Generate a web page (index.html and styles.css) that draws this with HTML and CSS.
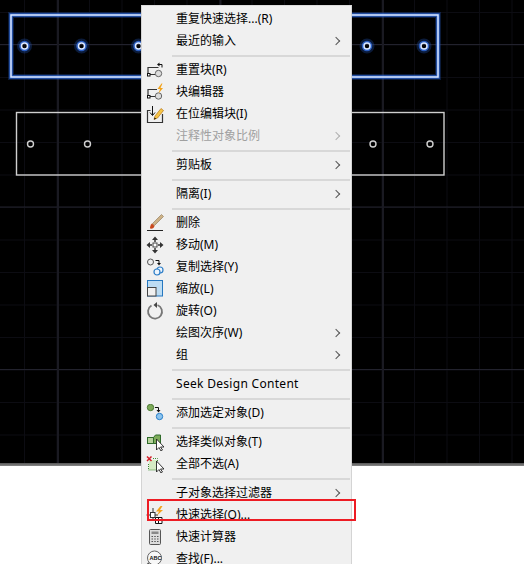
FILE: index.html
```html
<!DOCTYPE html>
<html lang="zh-CN">
<head>
    <meta charset="UTF-8">
    <meta name="viewport" content="width=device-width, initial-scale=1.0">
    <title>快速选择</title>
    <link rel="stylesheet" href="styles.css">
</head>
<body>
    <div class="stage">
        <div class="canvas">
            <svg class="drawing" width="524" height="463" viewBox="0 0 524 463">
                <!-- 选中的块 -->
                <g fill="none" stroke="#2458c0" stroke-opacity="0.3">
                    <rect x="11" y="15" width="427" height="62" stroke-width="6"/>
                    <circle cx="24.5" cy="46" r="5.5" stroke-width="4"/>
                    <circle cx="81.5" cy="46" r="5.5" stroke-width="4"/>
                    <circle cx="138.500" cy="46" r="5.5" stroke-width="4"/>
                    <circle cx="367" cy="46" r="5.5" stroke-width="4"/>
                    <circle cx="424" cy="46" r="5.5" stroke-width="4"/>
                </g>
                <g fill="none" stroke="#2f66d0" stroke-opacity="0.9">
                    <rect x="11" y="15" width="427" height="62" stroke-width="3.500"/>
                    <circle cx="24.5" cy="46" r="4" stroke-width="2.500"/>
                    <circle cx="81.5" cy="46" r="4" stroke-width="2.500"/>
                    <circle cx="138.500" cy="46" r="4" stroke-width="2.500"/>
                    <circle cx="367" cy="46" r="4" stroke-width="2.500"/>
                    <circle cx="424" cy="46" r="4" stroke-width="2.500"/>
                </g>
                <g fill="none" stroke="#dce8ff">
                    <rect x="11" y="15" width="427" height="62" stroke-width="1.500"/>
                    <circle cx="24.5" cy="46" r="3" stroke-width="1.500"/>
                    <circle cx="81.5" cy="46" r="3" stroke-width="1.500"/>
                    <circle cx="138.500" cy="46" r="3" stroke-width="1.500"/>
                    <circle cx="367" cy="46" r="3" stroke-width="1.500"/>
                    <circle cx="424" cy="46" r="3" stroke-width="1.500"/>
                </g>
                <!-- 未选中的块 -->
                <g fill="none" stroke="#cfcfcf" stroke-width="1.400">
                    <rect x="16.500" y="112.500" width="427.500" height="62.500"/>
                    <circle cx="30.500" cy="144" r="3"/>
                    <circle cx="87.500" cy="144" r="3"/>
                    <circle cx="373" cy="144" r="3"/>
                    <circle cx="430" cy="144" r="3"/>
                </g>
            </svg>
        </div>
        <div class="rule"></div>
        <div class="blank"></div>

        <div class="menu">
            <div class="item"><span class="icon"></span><span class="label">重复快速选择...(R)</span></div>
            <div class="item"><span class="icon"></span><span class="label">最近的输入</span><span class="arrow"></span></div>
            <div class="sep"></div>
            <div class="item">
                <span class="icon"><svg width="18" height="18" viewBox="0 0 18 18">
                    <path d="M2 13V6.500h10.500M3 13.500h6" fill="none" stroke="#333" stroke-width="1.200"/>
                    <rect x="1.500" y="12.500" width="2.500" height="2.500" fill="#fff" stroke="#111"/>
                    <circle cx="12.500" cy="12.500" r="3.200" fill="#ddd" stroke="#666"/>
                    <path d="M16 6.500V3.500h-3" fill="none" stroke="#111"/>
                    <path d="M13.500 1.500v4l-2.500-2z" fill="#111"/>
                </svg></span>
                <span class="label">重置块(R)</span>
            </div>
            <div class="item">
                <span class="icon"><svg width="18" height="18" viewBox="0 0 18 18">
                    <path d="M2 13V6.500h9M3 13.500h6" fill="none" stroke="#333" stroke-width="1.200"/>
                    <rect x="1.500" y="12.500" width="2.500" height="2.500" fill="#fff" stroke="#111"/>
                    <circle cx="12.500" cy="13" r="3.200" fill="#ddd" stroke="#666"/>
                    <path d="M15.500 0.500L11.500 6h2.500l-1.500 4.500L17 5h-2.500l2-4.500z" fill="#f2a31c"/>
                </svg></span>
                <span class="label">块编辑器</span>
            </div>
            <div class="item">
                <span class="icon"><svg width="18" height="18" viewBox="0 0 18 18">
                    <path d="M4.500 5.500H1.500v12h15V9" fill="none" stroke="#333" stroke-width="1.200"/>
                    <path d="M6.500 1v9M4 7.500l2.500 3 2.500-3" fill="none" stroke="#111"/>
                    <path d="M8 14.500l1-3.500 6-7.500 2.500 2-6 7.500z" fill="#f6c445" stroke="#b5761a" stroke-width="0.700"/>
                    <path d="M8 14.500l0.600-2 1.600 1.200z" fill="#111"/>
                </svg></span>
                <span class="label">在位编辑块(I)</span>
            </div>
            <div class="item disabled"><span class="icon"></span><span class="label">注释性对象比例</span><span class="arrow"></span></div>
            <div class="sep"></div>
            <div class="item"><span class="icon"></span><span class="label">剪贴板</span><span class="arrow"></span></div>
            <div class="sep"></div>
            <div class="item"><span class="icon"></span><span class="label">隔离(I)</span><span class="arrow"></span></div>
            <div class="sep"></div>
            <div class="item">
                <span class="icon"><svg width="18" height="18" viewBox="0 0 18 18">
                    <path d="M6.500 9.500L15.500 0.500l2 2-9 9z" fill="#cdb287" stroke="#8b7350" stroke-width="0.600"/>
                    <path d="M6 9.500l2.500 2.500c-0.500 2-2 3-4.500 2.500 0-2 0.500-4 2-5z" fill="#c9481c"/>
                    <path d="M1 16.500h16" stroke="#222"/>
                </svg></span>
                <span class="label">删除</span>
            </div>
            <div class="item">
                <span class="icon"><svg width="18" height="18" viewBox="0 0 18 18">
                    <rect x="7" y="7" width="4" height="4" fill="#fff" stroke="#444"/>
                    <path d="M9 0.500l3 3.500h-6zM9 17.500l3-3.500h-6zM0.500 9l3.500-3v6zM17.500 9l-3.500-3v6z" fill="#333"/>
                    <path d="M9 4v2M9 12v2M4 9h2M12 9h2" stroke="#333" stroke-width="1.500"/>
                </svg></span>
                <span class="label">移动(M)</span>
            </div>
            <div class="item">
                <span class="icon"><svg width="18" height="18" viewBox="0 0 18 18">
                    <circle cx="4.500" cy="4" r="3" fill="#eee" stroke="#555"/>
                    <path d="M9.500 2.500h3.500v3" fill="none" stroke="#111"/>
                    <path d="M11 5l2 2.500 2-2.500z" fill="#111"/>
                    <circle cx="14" cy="12" r="3" fill="#eef5fc" stroke="#2f7fc8" stroke-width="1.200"/>
                    <circle cx="11" cy="14" r="3" fill="#eef5fc" stroke="#2f7fc8" stroke-width="1.200"/>
                </svg></span>
                <span class="label">复制选择(Y)</span>
            </div>
            <div class="item">
                <span class="icon"><svg width="18" height="18" viewBox="0 0 18 18">
                    <rect x="1.500" y="0.500" width="15" height="15.500" fill="#bcdcf3" stroke="#2577c0"/>
                    <rect x="1.500" y="7.500" width="8.500" height="8.500" fill="#f0f0f0" stroke="#444"/>
                </svg></span>
                <span class="label">缩放(L)</span>
            </div>
            <div class="item">
                <span class="icon"><svg width="18" height="18" viewBox="0 0 18 18">
                    <path d="M5.500 3.500a7 7 0 1 0 6-0.500" fill="none" stroke="#777" stroke-width="1.800"/>
                    <path d="M11 0l-3.500 3 3.500 3z" fill="#444"/>
                </svg></span>
                <span class="label">旋转(O)</span>
            </div>
            <div class="item"><span class="icon"></span><span class="label">绘图次序(W)</span><span class="arrow"></span></div>
            <div class="item"><span class="icon"></span><span class="label">组</span><span class="arrow"></span></div>
            <div class="sep"></div>
            <div class="item"><span class="icon"></span><span class="label latin">Seek Design Content</span></div>
            <div class="sep"></div>
            <div class="item">
                <span class="icon"><svg width="18" height="18" viewBox="0 0 18 18">
                    <circle cx="4.500" cy="3.500" r="3.200" fill="#7eab5a" stroke="#4d7a35"/>
                    <path d="M9 3.500h3.500v3" fill="none" stroke="#111"/>
                    <path d="M10.500 6l2 2.500 2-2.500z" fill="#111"/>
                    <circle cx="13.500" cy="12.500" r="3.200" fill="#8cc4ee" stroke="#2a7fc9"/>
                </svg></span>
                <span class="label">添加选定对象(D)</span>
            </div>
            <div class="sep"></div>
            <div class="item">
                <span class="icon"><svg width="18" height="18" viewBox="0 0 18 18">
                    <rect x="1.500" y="4.500" width="6" height="6" fill="#b7d29c" stroke="#2f6b2a"/>
                    <path d="M7.500 4.500l2-2.500h5v8.500h-7z" fill="#7eab5a" stroke="#2f6b2a"/>
                    <path d="M10.500 6v11l2.500-2.500 2 3.500 1.500-1-2-3h3.500z" fill="#fff" stroke="#222" stroke-width="0.900"/>
                </svg></span>
                <span class="label">选择类似对象(T)</span>
            </div>
            <div class="item">
                <span class="icon"><svg width="18" height="18" viewBox="0 0 18 18">
                    <rect x="3" y="5" width="8" height="10" fill="#d6ecc4"/>
                    <path d="M7 3.500h4.500v11.500H2.500V8" fill="none" stroke="#3d8a32" stroke-dasharray="1 1"/>
                    <path d="M1 1.500l4.500 4.500M5.500 1.500L1 6" stroke="#d3202a" stroke-width="1.500"/>
                    <path d="M10.500 6v11l2.500-2.500 2 3.500 1.500-1-2-3h3.500z" fill="#fff" stroke="#222" stroke-width="0.900"/>
                </svg></span>
                <span class="label">全部不选(A)</span>
            </div>
            <div class="sep"></div>
            <div class="item"><span class="icon"></span><span class="label">子对象选择过滤器</span><span class="arrow"></span></div>
            <div class="item">
                <span class="icon"><svg width="18" height="18" viewBox="0 0 18 18">
                    <path d="M0.500 9h4M9 9h3M7 2v4M7 12v3" stroke="#333"/>
                    <rect x="4.500" y="6.500" width="4.500" height="5" fill="#fff" stroke="#333"/>
                    <path d="M9.500 11.500h6.500v6h-6.500zM9.500 14.500h6.500M12.500 11.500v6" fill="#fff" stroke="#111"/>
                    <path d="M14.500 0L10 5.500h3L11 9.500l6-5.500h-3L16.500 0z" fill="#f2a31c"/>
                </svg></span>
                <span class="label">快速选择(Q)...</span>
            </div>
            <div class="item">
                <span class="icon"><svg width="18" height="18" viewBox="0 0 18 18">
                    <rect x="3.500" y="1.500" width="11" height="15" rx="1" fill="#dcdcdc" stroke="#555"/>
                    <rect x="5.500" y="3.500" width="7" height="2.500" fill="#888"/>
                    <path d="M5.500 8.500h7M5.500 11h7M5.500 13.500h7" stroke="#555" stroke-width="1.200" stroke-dasharray="1.500 1.250"/>
                </svg></span>
                <span class="label">快速计算器</span>
            </div>
            <div class="item">
                <span class="icon"><svg width="18" height="18" viewBox="0 0 18 18">
                    <circle cx="8.500" cy="8" r="7" fill="#f8f8f8" stroke="#666"/>
                    <path d="M3 13l-2.500 3" stroke="#555" stroke-width="2"/>
                    <text class="abc" x="3.500" y="10">ABC</text>
                </svg></span>
                <span class="label">查找(F)...</span>
            </div>
        </div>

        <!-- 标注框 -->
        <div class="callout"></div>
    </div>
</body>
</html>
```

FILE: styles.css
```css
html, body {
    margin: 0;
    height: 100%;
    background: #fff;
}
.stage {
    position: relative;
    display: flex;
    flex-direction: column;
    width: 524px;
    height: 564px;
    overflow: hidden;
    font-family: "Noto Sans", "Noto Sans CJK SC", sans-serif;
    font-size: 12px;
    color: #000;
}
.canvas {
    height: 463px;
    background-color: #000;
    background-image:
        linear-gradient(to right, #1a1a22 2px, transparent 2px),
        linear-gradient(to bottom, #22222d 1px, transparent 1px),
        linear-gradient(to right, #0c0c12 1px, transparent 1px),
        linear-gradient(to bottom, #0c0c12 1px, transparent 1px);
    background-size: 162.5px 100%, 100% 162.5px, 32.5px 100%, 100% 32.5px;
    background-position: 57px 0, 0 44px, 24px 0, 0 12px;
}
.drawing {
    display: block;
}
.rule {
    height: 3px;
    background: linear-gradient(to bottom, #555, #888);
}
.blank {
    flex: 1;
    background: #fff;
}
.menu {
    position: absolute;
    top: 5px;
    left: 141px;
    width: 209px;
    padding: 2px 0 0;
    background: #f0f0f0;
    border: 1px solid #d4d4d4;
    border-top-color: #dcdcdc;
}
.item {
    display: flex;
    align-items: center;
    height: 22px;
    line-height: 22px;
}
.icon {
    display: flex;
    flex: none;
    align-items: center;
    width: 26px;
    height: 18px;
    padding-left: 4px;
}
.label {
    flex: 1;
    padding-left: 4px;
    white-space: nowrap;
}
.latin {
    letter-spacing: 0.3px;
}
.arrow {
    width: 5px;
    height: 5px;
    margin-right: 12px;
    border-top: 1px solid #555;
    border-right: 1px solid #555;
    transform: rotate(45deg);
}
.disabled {
    color: #a0a0a0;
}
.disabled .arrow {
    border-color: #b0b0b0;
}
.sep {
    height: 2px;
    margin: 3px 1px 2px 30px;
    background: #d8d8d8;
}
.abc {
    font-family: "Liberation Sans", sans-serif;
    font-size: 5.5px;
    font-weight: bold;
    fill: #111;
}
.callout {
    position: absolute;
    top: 499px;
    left: 147px;
    width: 205px;
    height: 18px;
    border: 2px solid #ed1c24;
}
```
